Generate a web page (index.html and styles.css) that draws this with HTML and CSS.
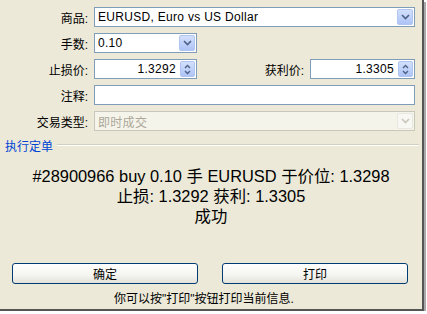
FILE: index.html
```html
<!DOCTYPE html>
<html lang="zh-CN">
<head>
    <meta charset="UTF-8">
    <title>执行定单</title>
    <link rel="stylesheet" href="styles.css">
</head>
<body>
<div class="window">
    <div class="form">
        <div class="row">
            <label class="label">商品:</label>
            <div class="combo wide">
                <span class="value">EURUSD, Euro vs US Dollar</span>
                <span class="drop"><svg width="9" height="6" viewBox="0 0 9 6"><path d="M1 1l3.5 3.5L8 1" fill="none" stroke="#4d6185" stroke-width="1.6"/></svg></span>
            </div>
        </div>
        <div class="row">
            <label class="label">手数:</label>
            <div class="combo short">
                <span class="value">0.10</span>
                <span class="drop"><svg width="9" height="6" viewBox="0 0 9 6"><path d="M1 1l3.5 3.5L8 1" fill="none" stroke="#4d6185" stroke-width="1.6"/></svg></span>
            </div>
        </div>
        <div class="row">
            <label class="label">止损价:</label>
            <div class="spin short">
                <span class="value num">1.3292</span>
                <span class="arrows"><svg width="7" height="11" viewBox="0 0 7 11"><path d="M1 4l2.5-2.5L6 4M1 7l2.5 2.5L6 7" fill="none" stroke="#4d6185" stroke-width="1.4"/></svg></span>
            </div>
            <label class="label grow">获利价:</label>
            <div class="spin tp">
                <span class="value num">1.3305</span>
                <span class="arrows"><svg width="7" height="11" viewBox="0 0 7 11"><path d="M1 4l2.5-2.5L6 4M1 7l2.5 2.5L6 7" fill="none" stroke="#4d6185" stroke-width="1.4"/></svg></span>
            </div>
        </div>
        <div class="row">
            <label class="label">注释:</label>
            <div class="input wide"></div>
        </div>
        <div class="row">
            <label class="label">交易类型:</label>
            <div class="combo wide disabled">
                <span class="value">即时成交</span>
                <span class="drop"><svg width="9" height="6" viewBox="0 0 9 6"><path d="M1 1l3.5 3.5L8 1" fill="none" stroke="#c9c7ba" stroke-width="1.6"/></svg></span>
            </div>
        </div>
    </div>

    <div class="group-title">
        <span>执行定单</span>
        <i class="rule"></i>
    </div>

    <div class="message">
        <p>#28900966 buy 0.10 手 EURUSD 于价位: 1.3298</p>
        <p>止损: 1.3292 获利: 1.3305</p>
        <p>成功</p>
    </div>

    <div class="buttons">
        <button class="btn">确定</button>
        <button class="btn">打印</button>
    </div>

    <div class="hint">你可以按"打印"按钮打印当前信息.</div>
</div>
</body>
</html>
```

FILE: styles.css
```css
*{
    box-sizing: border-box;
    margin: 0;
    padding: 0;
}
body{
    background: #fff;
    font-family: "Liberation Sans", "Noto Sans CJK SC", sans-serif;
    font-size: 12px;
    color: #000;
}
.window{
    width: 424px;
    height: 311px;
    background: #ece9d8;
    border-right: 2px solid #555;
    border-bottom: 2px solid #555;
    box-shadow: 2px 2px 0 #aaa;
    display: flex;
    flex-direction: column;
}

/* 表单 */
.form{
    padding: 7px 7px 0 0;
    display: flex;
    flex-direction: column;
    gap: 6px;
}
.row{
    display: flex;
    align-items: center;
    height: 20px;
    gap: 6px;
}
.label{
    width: 88px;
    text-align: right;
    flex-shrink: 0;
}
.label.grow{
    width: auto;
    flex: 1;
}
.combo,
.spin,
.input{
    height: 20px;
    border: 1px solid #7f9db9;
    background: #fff;
    display: flex;
    align-items: center;
    padding: 1px;
}
.wide{
    flex: 1;
}
.short{
    width: 103px;
}
.tp{
    width: 105px;
}
.value{
    flex: 1;
    padding-left: 2px;
    white-space: nowrap;
    overflow: hidden;
    letter-spacing: 0.3px;
}
.num{
    text-align: right;
    padding-right: 4px;
}
.drop{
    width: 16px;
    height: 16px;
    border: 1px solid #b1c5f3;
    border-radius: 2px;
    background: linear-gradient(#d3e0fc, #aec4f6);
    display: flex;
    align-items: center;
    justify-content: center;
}
.arrows{
    width: 15px;
    height: 16px;
    border: 1px solid #b1c5f3;
    border-radius: 2px;
    background: linear-gradient(#d3e0fc, #aec4f6);
    display: flex;
    align-items: center;
    justify-content: center;
}
.disabled{
    border-color: #c9c7ba;
    background: #f5f4ea;
    color: #aca899;
}
.disabled .drop{
    border-color: #e8e7e0;
    background: #f7f7f4;
}

/* 分组标题 */
.group-title{
    margin-top: 7px;
    height: 14px;
    display: flex;
    align-items: center;
    padding: 0 3px 0 5px;
    color: #0046d5;
}
.rule{
    flex: 1;
    margin-left: 4px;
    border-top: 1px solid #d0d0bf;
    border-bottom: 1px solid #fff;
}

/* 结果 */
.message{
    margin-top: 14px;
    text-align: center;
    font-size: 16.4px;
    line-height: 20px;
}

/* 按钮 */
.buttons{
    margin-top: 37px;
    display: flex;
    gap: 24px;
    padding-left: 12px;
}
.btn{
    width: 186px;
    height: 21px;
    border: 1px solid #003c74;
    border-radius: 3px;
    background: linear-gradient(#fff 0%, #f4f4f0 60%, #e3e2da 100%);
    font-family: "Liberation Sans", "Noto Sans CJK SC", sans-serif;
    font-size: 12px;
    color: #000;
}
.hint{
    margin-top: 8px;
    text-align: center;
    padding-right: 14px;
    line-height: 14px;
}
```
